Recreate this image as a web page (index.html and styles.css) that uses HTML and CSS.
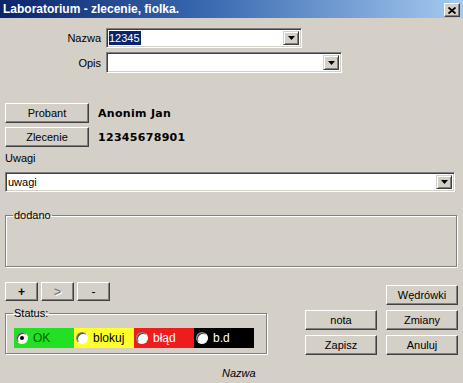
FILE: index.html
```html
<!DOCTYPE html>
<html lang="pl">
<head>
<meta charset="utf-8">
<title>Laboratorium - zlecenie, fiolka.</title>
<link rel="stylesheet" href="styles.css">
</head>
<body>
<div class="window">
  <div class="titlebar">
    <span class="title">Laboratorium - zlecenie, fiolka.</span>
    <span class="close"><svg width="8" height="7" viewBox="0 0 8 7"><path d="M0.5 0.5L7.5 6.5M7.5 0.5L0.5 6.5" stroke="#000" stroke-width="1.8" fill="none"/></svg></span>
  </div>
  <div class="content">
    <div class="form-top">
      <label class="lbl">Nazwa</label>
      <div class="combo combo-nazwa">
        <span class="value"><span class="sel">12345</span></span>
        <span class="drop"><svg width="7" height="4" viewBox="0 0 7 4"><path d="M0 0H7L3.5 4Z" fill="#000"/></svg></span>
      </div>
      <label class="lbl">Opis</label>
      <div class="combo combo-opis">
        <span class="value"></span>
        <span class="drop"><svg width="7" height="4" viewBox="0 0 7 4"><path d="M0 0H7L3.5 4Z" fill="#000"/></svg></span>
      </div>
    </div>

    <div class="info">
      <button class="btn btn-info">Probant</button><span class="strong">Anonim Jan</span>
      <button class="btn btn-info">Zlecenie</button><span class="strong">12345678901</span>
    </div>

    <div class="uwagi-label">Uwagi</div>
    <div class="combo combo-uwagi">
      <span class="value">uwagi</span>
      <span class="drop"><svg width="7" height="4" viewBox="0 0 7 4"><path d="M0 0H7L3.5 4Z" fill="#000"/></svg></span>
    </div>

    <fieldset class="group dodano">
      <legend>dodano</legend>
      <div class="dodano-body"></div>
    </fieldset>

    <div class="bottom">
      <div class="left">
        <div class="tools">
          <button class="btn tool tool-bold">+</button>
          <button class="btn tool tool-disabled">&gt;</button>
          <button class="btn tool">-</button>
        </div>
        <fieldset class="group status">
          <legend>Status:</legend>
          <div class="radios">
            <span class="radio r-ok"><i class="dot checked"></i>OK</span>
            <span class="radio r-blok"><i class="dot"></i>blokuj</span>
            <span class="radio r-blad"><i class="dot"></i>błąd</span>
            <span class="radio r-bd"><i class="dot"></i>b.d</span>
          </div>
        </fieldset>
        <div class="caption">Nazwa</div>
      </div>
      <div class="actions">
        <button class="btn act a-wed">Wędrówki</button>
        <button class="btn act a-nota">nota</button>
        <button class="btn act a-zmiany">Zmiany</button>
        <button class="btn act a-zapisz">Zapisz</button>
        <button class="btn act a-anuluj">Anuluj</button>
      </div>
    </div>
  </div>
</div>
</body>
</html>
```
FILE: styles.css
```css
* { box-sizing: border-box; }
html, body { margin: 0; padding: 0; background: #d4d0c8; }
body {
  font-family: "Liberation Sans", Arial, sans-serif;
  font-size: 11px;
  color: #000;
}
.window {
  width: 463px;
  height: 383px;
  overflow: hidden;
  background: #d4d0c8;
}
.titlebar {
  height: 18px;
  display: flex;
  align-items: center;
  justify-content: space-between;
  padding: 0 3px 0 3px;
  background: linear-gradient(to right, #0a246a 0%, #3a6ab0 45%, #a6caf0 100%);
}
.title {
  color: #fff;
  font-weight: bold;
  font-size: 12px;
  line-height: 14px;
}
.close {
  width: 16px;
  height: 14px;
  margin-top: 2px;
  background: #d4d0c8;
  border: 1px solid;
  border-color: #fff #404040 #404040 #fff;
  box-shadow: inset -1px -1px #808080;
  display: flex;
  align-items: center;
  justify-content: center;
}
.content { padding: 0 5px; }

/* combo boxes */
.combo {
  display: flex;
  background: #fff;
  border: 1px solid;
  border-color: #808080 #fff #fff #808080;
  box-shadow: inset 1px 1px #404040, inset -1px -1px #d4d0c8;
  padding: 2px;
}
.combo .value {
  flex: 1;
  display: flex;
  align-items: center;
  padding-left: 0;
  white-space: nowrap;
}
.combo .sel {
  background: #0a246a;
  color: #fff;
  line-height: 14px;
  padding: 0 1px 0 0;
}
.drop {
  width: 16px;
  background: #d4d0c8;
  border: 1px solid;
  border-color: #d4d0c8 #404040 #404040 #d4d0c8;
  box-shadow: inset 1px 1px #fff, inset -1px -1px #808080;
  display: flex;
  align-items: center;
  justify-content: center;
}

.form-top {
  margin-top: 10px;
  display: grid;
  grid-template-columns: 96px auto;
  grid-template-rows: 20px 21px;
  column-gap: 5px;
  row-gap: 4px;
  align-items: center;
}
.lbl { text-align: right; }
.combo-nazwa { width: 196px; height: 20px; }
.combo-opis { width: 236px; height: 21px; }

/* buttons */
.btn {
  font-family: "Liberation Sans", Arial, sans-serif;
  font-size: 11px;
  color: #000;
  background: #d4d0c8;
  border: 1px solid;
  border-color: #fff #404040 #404040 #fff;
  box-shadow: inset -1px -1px #808080;
  padding: 0;
  margin: 0;
  display: flex;
  align-items: center;
  justify-content: center;
}

.info {
  margin-top: 30px;
  display: grid;
  grid-template-columns: 84px auto;
  grid-template-rows: 20px 20px;
  column-gap: 9px;
  row-gap: 4px;
  align-items: center;
}
.btn-info { height: 20px; }
.strong {
  font-family: "DejaVu Sans", Verdana, sans-serif;
  font-weight: bold;
  font-size: 11px;
  letter-spacing: 0.3px;
}

.uwagi-label {
  margin-top: 5px;
  line-height: 13px;
}
.combo-uwagi {
  margin-top: 7px;
  width: 450px;
  height: 20px;
}
.combo-uwagi .value { padding-left: 0; }

/* group boxes */
.group {
  margin: 0;
  padding: 0;
  border: 1px solid #808080;
  box-shadow: inset 1px 1px #fff, 1px 1px 0 #fff;
  min-width: 0;
}
.group legend {
  margin-left: 7px;
  padding: 0 1px;
  line-height: 13px;
  height: 13px;
}
.dodano {
  margin-top: 17px;
  width: 452px;
}
.dodano-body { height: 44px; }

.bottom {
  margin-top: 15px;
  display: flex;
  align-items: flex-start;
}
.left {
  width: 262px;
  display: flex;
  flex-direction: column;
}
.tools {
  display: flex;
  gap: 3px;
}
.tool {
  width: 33px;
  height: 19px;
  font-size: 12px;
}
.tool-bold { font-weight: bold; }
.tool-disabled { color: #808080; font-weight: bold; text-shadow: 1px 1px #fff; }

.status {
  margin-top: 6px;
  width: 262px;
}
.radios {
  margin: 8px 0 5px 8px;
  display: flex;
  height: 20px;
}
.radio {
  width: 60px;
  height: 20px;
  display: flex;
  align-items: center;
  gap: 5px;
  padding-left: 2px;
  font-size: 12px;
}
.r-ok { background: #22e022; color: #0b5a0b; }
.r-blok { background: #ffff2a; color: #000; }
.r-blad { background: #ee1d1d; color: #fff; }
.r-bd { background: #000; color: #fff; }
.dot {
  width: 12px;
  height: 12px;
  border-radius: 50%;
  background: #fff;
  border: 1px solid;
  border-color: #808080 #fff #fff #808080;
  box-shadow: inset 1px 1px #404040;
  display: flex;
  align-items: center;
  justify-content: center;
  flex: none;
}
.dot.checked::after {
  content: "";
  width: 4px;
  height: 4px;
  border-radius: 50%;
  background: #000;
}
.caption {
  margin-top: 13px;
  padding-left: 217px;
  font-style: italic;
  line-height: 13px;
}

.actions {
  margin-left: 38px;
  margin-top: 3px;
  display: grid;
  grid-template-columns: 72px 72px;
  grid-template-rows: 20px 20px 20px;
  column-gap: 9px;
  row-gap: 5px;
}
.act { height: 20px; }
.a-wed { grid-column: 2; grid-row: 1; }
.a-nota { grid-column: 1; grid-row: 2; }
.a-zmiany { grid-column: 2; grid-row: 2; }
.a-zapisz { grid-column: 1; grid-row: 3; }
.a-anuluj { grid-column: 2; grid-row: 3; }
```
